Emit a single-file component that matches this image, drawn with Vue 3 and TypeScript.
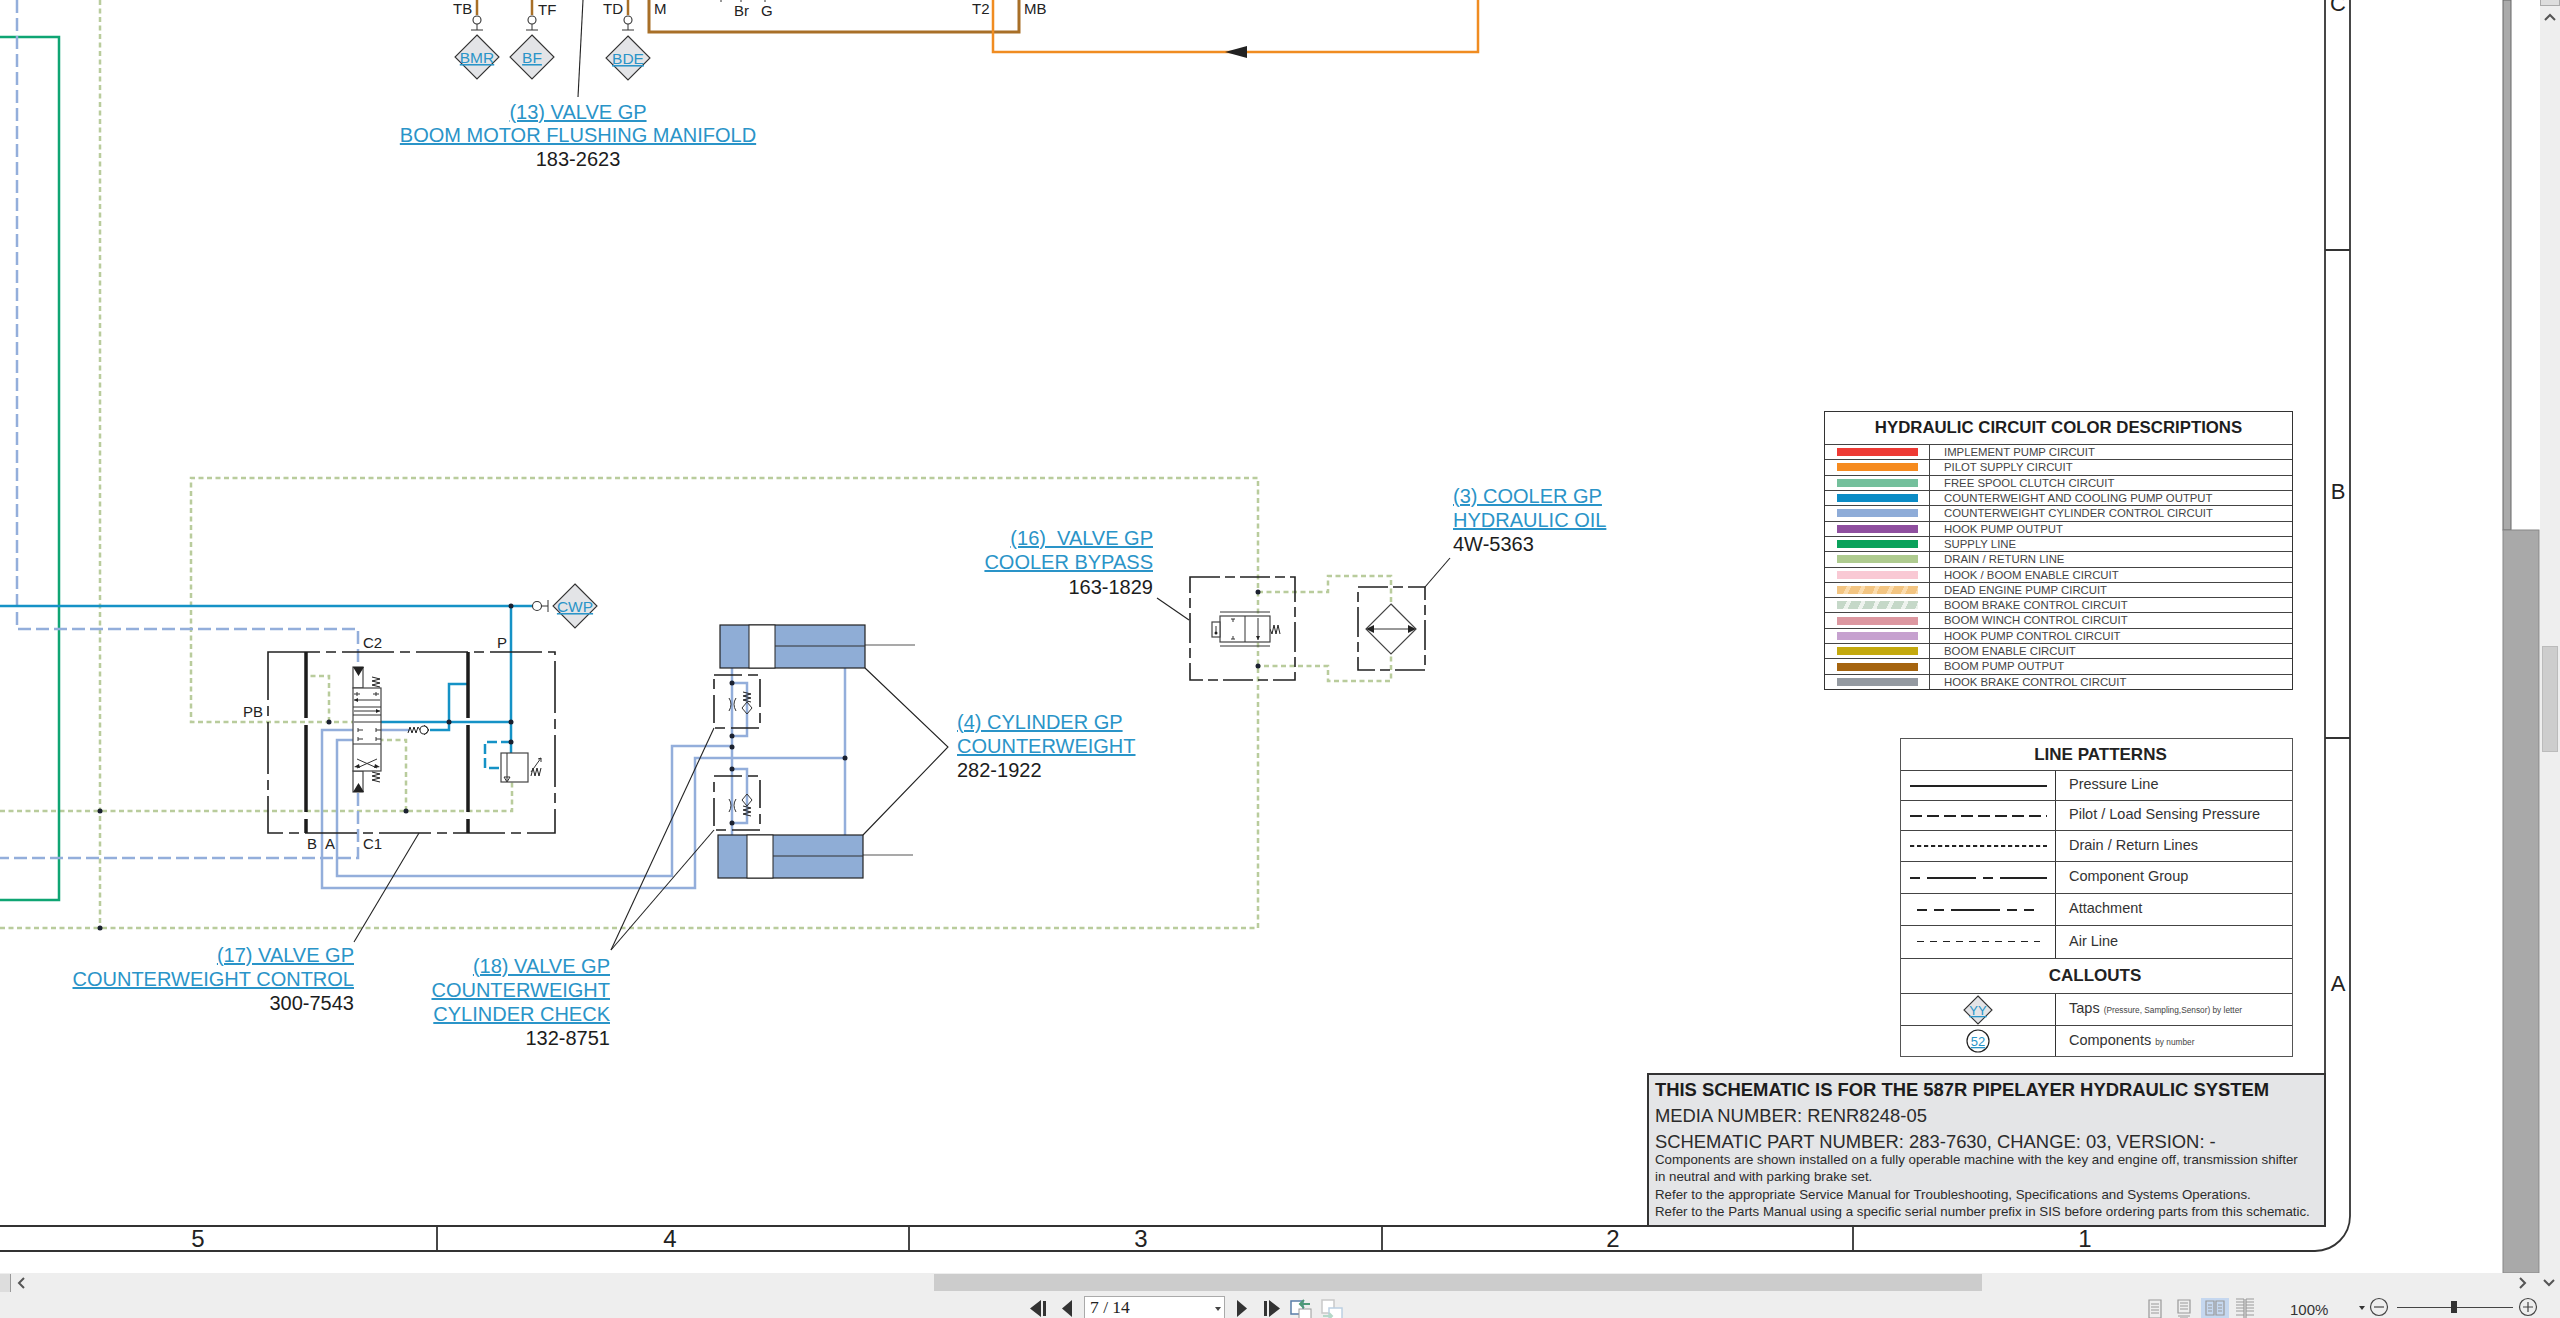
<template>
  <div class="viewer">
    <div class="main">
      <div class="sheet">
        <svg class="drawing" width="2540" height="1273" viewBox="0 0 2540 1273">
          <!-- page edge -->
          <rect x="2503" y="0" width="8" height="530" fill="#aaa" stroke="#666" />
          <rect x="2503" y="530" width="36" height="743" fill="#a9a9a9" stroke="#888" />

          <path v-for="(w, i) in wires" :key="i" :d="w.d" :class="['wire', w.cls]" />
          <path d="M1225 52 L1247 46 V58 Z" class="solid" />

          <!-- cylinders -->
          <g v-for="c in cylinders" :key="c.x">
            <path :d="`M${c.x + 55} ${c.y + 20} H${c.x + 195}`" class="rod" />
            <rect :x="c.x" :y="c.y" width="145" height="43" class="cyl" />
            <rect :x="c.x + 29" :y="c.y" width="26" height="43" class="cyl-white" />
            <path :d="`M${c.x + 55} ${c.y + 21} H${c.x + 145}`" class="rod-in" />
          </g>

          <!-- component boxes -->
          <rect x="268" y="652" width="287" height="181" class="group" />
          <path d="M306 652 V833" class="bar" />
          <path d="M468 652 V833" class="bar" />
          <rect x="714" y="675" width="46" height="53" class="group small" />
          <rect x="714" y="776" width="46" height="54" class="group small" />
          <rect x="1190" y="577" width="105" height="103" class="group mid" />
          <rect x="1358" y="587" width="67" height="83" class="group mid" />

          <path v-for="(d, i) in leaders" :key="i" :d="d" class="leader" />

          <!-- spool valve -->
          <rect x="353" y="667" width="10" height="21" class="sym" />
          <rect x="353" y="771" width="10" height="21" class="sym" />
          <path d="M353 667 H364 L358.5 676 Z M353 792 H364 L358.5 783 Z" class="solid" />
          <rect x="353" y="688" width="28" height="83" class="sym" />
          <path d="M353 715 H381 M353 744 H381 M353 707 H381 M354 722 H381" class="thin" />
          <path d="M357 692 V696 M354 694 H360 M376 692 V696 M373 694 H379 M358 730 H363 M358 728 V732 M376 730 H381 M376 728 V732 M358 739 H363 M358 737 V741 M376 739 H381 M376 737 V741 M357 768 L377 759 M357 759 L377 768" class="thin" />
          <path d="M354 700 H380 M354 711 H380" class="thin" />
          <path d="M354 700 L358 698 V702 Z M380 711 L376 709 V713 Z M354 767 L359 764 L360 768 Z M380 767 L375 764 L374 768 Z" class="solid" />
          <path v-for="(d, i) in springs" :key="i" :d="d" class="thin spring" />

          <!-- check valves -->
          <circle cx="424" cy="730" r="4" class="chk" />
          <path d="M424 725 L429 730 L424 735 M747 702 L752 708 L747 714 L742 708 Z M747 794 L752 800 L747 806 L742 800 Z" class="thin" />
          <path d="M729 698 Q733 704 729 711 M736 698 Q732 704 736 711 M729 799 Q733 805 729 812 M736 799 Q732 805 736 812" class="thin" />

          <!-- relief valve -->
          <rect x="501" y="753" width="27" height="29" class="sym" />
          <path d="M507 753 V781 M504 777 L507 782 L510 777 Z M531 772 L541 758 M538 759 L541 758 L541 762" class="thin" />

          <!-- tap fittings -->
          <g v-for="t in taps" :key="t">
            <circle :cx="t" cy="20" r="4" class="chk" />
            <path :d="`M${t} 24 V30 M${t - 6} 30 H${t + 6}`" class="thin" />
          </g>
          <path d="M548 600 V612 M542 606 H548" class="thin" />
          <circle cx="537" cy="606" r="4.5" class="chk" />
          <path d="M721 0 V2 M741 0 V2 M765 0 V2" class="thin" />

          <!-- cooler bypass valve -->
          <rect x="1220" y="616" width="50" height="26" class="sym" />
          <rect x="1212" y="622" width="8" height="15" class="sym" />
          <path d="M1245 616 V642 M1220 612 H1270 M1220 646 H1270 M1258 618 V640 M1216 626 V634 M1233 619 V622 M1231 619 H1235 M1233 636 V639 M1231 639 H1235" class="thin" />
          <path d="M1256 636 H1260 L1258 640 Z" class="solid" />
          <circle cx="1216" cy="633" r="1.5" class="solid" />

          <!-- cooler -->
          <polygon points="1391,604 1416,629 1391,654 1366,629" class="sym" />
          <path d="M1368 629 H1414" class="thin" />
          <path d="M1366 629 L1374 625 V633 Z M1416 629 L1408 625 V633 Z" class="solid" />

          <!-- connection dots -->
          <circle v-for="(d, i) in dots" :key="i" :cx="d[0]" :cy="d[1]" r="2.5" class="dot" />

          <!-- tap callouts -->
          <g v-for="t in diamonds" :key="t.name">
            <polygon :points="`${t.x},${t.y - 22} ${t.x + 22},${t.y} ${t.x},${t.y + 22} ${t.x - 22},${t.y}`" class="tap" />
            <text :x="t.x" :y="t.y + 6" text-anchor="middle" class="t-tap">{{ t.name }}</text>
          </g>

          <text v-for="(l, i) in portLabels" :key="i" :x="l[1]" :y="l[2]" class="t-port">{{ l[0] }}</text>
          <text v-for="(l, i) in labels" :key="i" :x="l.x" :y="l.y" :text-anchor="l.a" :class="l.link ? 't-link' : 't-part'">{{ l.t }}</text>

          <!-- frame -->
          <path d="M2350 0 V1216 A35 35 0 0 1 2315 1251 H0 M2325 0 V1073 M0 1226 H1647 M2325 250 H2350 M2325 738 H2350" class="frame" />
          <path v-for="x in [437, 909, 1382, 1853]" :key="x" :d="`M${x} 1226 V1251`" class="frame" />
          <text v-for="n in rulerNums" :key="n[0]" :x="n[1]" y="1247" text-anchor="middle" class="t-ruler">{{ n[0] }}</text>
          <text v-for="n in rulerLetters" :key="n[0]" x="2338" :y="n[1]" text-anchor="middle" class="t-ruler small">{{ n[0] }}</text>
        </svg>

        <div class="legend colors">
          <div class="legend-title">HYDRAULIC CIRCUIT COLOR DESCRIPTIONS</div>
          <div v-for="r in circuits" :key="r.name" class="color-row">
            <div class="swatch-cell"><div class="swatch" :style="{ background: r.bg }"></div></div>
            <div class="color-name">{{ r.name }}</div>
          </div>
        </div>

        <div class="legend patterns">
          <div class="pat-title">LINE PATTERNS</div>
          <div v-for="p in patterns" :key="p.name" class="pat-row">
            <div class="pat-sample">
              <svg width="137" height="8">
                <line :x1="p.x1" :y1="p.y" :x2="p.x2" :y2="p.y" stroke="#222" :stroke-width="p.w" :stroke-dasharray="p.dash" />
              </svg>
            </div>
            <div class="pat-name">{{ p.name }}</div>
          </div>
          <div class="pat-title second">CALLOUTS</div>
          <div class="pat-row">
            <div class="pat-sample">
              <svg width="30" height="30" viewBox="0 0 30 30">
                <polygon points="15,1 29,15 15,29 1,15" class="tap" />
                <text x="15" y="20" text-anchor="middle" class="t-mini">YY</text>
              </svg>
            </div>
            <div class="pat-name">Taps <small>(Pressure, Sampling,Sensor) by letter</small></div>
          </div>
          <div class="pat-row">
            <div class="pat-sample">
              <svg width="26" height="26" viewBox="0 0 26 26">
                <circle cx="13" cy="13" r="11" fill="#fff" stroke="#222" stroke-width="1.2" />
                <text x="13" y="18" text-anchor="middle" class="t-mini">52</text>
              </svg>
            </div>
            <div class="pat-name">Components <small>by number</small></div>
          </div>
        </div>

        <div class="title-box">
          <div class="tb-head">THIS SCHEMATIC IS FOR THE 587R PIPELAYER HYDRAULIC SYSTEM</div>
          <div class="tb-line">MEDIA NUMBER: RENR8248-05</div>
          <div class="tb-line">SCHEMATIC PART NUMBER: 283-7630, CHANGE: 03, VERSION: -</div>
          <div class="tb-notes">
            <div class="tb-note">Components are shown installed on a fully operable machine with the key and engine off, transmission shifter</div>
            <div class="tb-note">in neutral and with parking brake set.</div>
            <div class="tb-note">Refer to the appropriate Service Manual for Troubleshooting, Specifications and Systems Operations.</div>
            <div class="tb-note">Refer to the Parts Manual using a specific serial number prefix in SIS before ordering parts from this schematic.</div>
          </div>
        </div>
      </div>

      <div class="vbar">
        <div class="vstub"></div>
        <svg class="vcaret" width="12" height="8" viewBox="0 0 12 8"><path d="M1 7 L6 2 L11 7" class="chev" /></svg>
        <div class="vthumb"></div>
      </div>
    </div>

    <div class="hbar">
      <div class="hstub"></div>
      <svg width="8" height="12" viewBox="0 0 8 12"><path d="M7 1 L2 6 L7 11" class="chev" /></svg>
      <div class="hthumb"></div>
      <svg class="hright" width="8" height="12" viewBox="0 0 8 12"><path d="M1 1 L6 6 L1 11" class="chev" /></svg>
      <svg class="hdown" width="12" height="8" viewBox="0 0 12 8"><path d="M1 1 L6 6 L11 1" class="chev" /></svg>
    </div>

    <div class="toolbar">
      <div class="pager">
        <svg width="17" height="17" viewBox="0 0 17 17"><path d="M11 0 V17 L0 8.5 Z M13 1 H16 V16 H13 Z" fill="#333" /></svg>
        <svg class="prev" width="10" height="17" viewBox="0 0 10 17"><path d="M10 0 V17 L0 8.5 Z" fill="#333" /></svg>
        <div class="page-input"><span>7 / 14</span><i></i></div>
        <svg class="next" width="10" height="17" viewBox="0 0 10 17"><path d="M0 0 V17 L10 8.5 Z" fill="#333" /></svg>
        <svg class="last" width="17" height="17" viewBox="0 0 17 17"><path d="M1 1 H4 V16 H1 Z M6 0 V17 L17 8.5 Z" fill="#333" /></svg>
        <svg class="back" width="22" height="22" viewBox="0 0 22 22">
          <rect x="1" y="2" width="12" height="13" fill="#fff" stroke="#5a7da8" stroke-width="1.5" />
          <rect x="9" y="10" width="12" height="12" fill="#fff" stroke="#999" />
          <path d="M10 5 H20 M14 1 L10 5 L14 9" fill="none" stroke="#4f9a78" stroke-width="2" />
        </svg>
        <svg class="fwd" width="22" height="22" viewBox="0 0 22 22">
          <rect x="1" y="1" width="12" height="13" fill="#fff" stroke="#c9c9c9" stroke-width="1.5" />
          <rect x="8" y="9" width="13" height="13" fill="#fff" stroke="#bcd0e2" stroke-width="1.5" />
          <path d="M2 17 H11 M8 14 L11 17 L8 20" fill="none" stroke="#b5d8c8" stroke-width="2" />
        </svg>
      </div>

      <div class="views">
        <svg width="14" height="26" viewBox="0 0 14 26"><path d="M1 8 H13 V26 H1 Z M3 12 H11 M3 15 H11 M3 18 H11 M3 21 H11" class="ico" /></svg>
        <svg class="v2" width="14" height="26" viewBox="0 0 14 26"><path d="M1 8 H13 V21 H1 Z M3 11 H11 M3 14 H11 M3 17 H11 M1 24 H13 M3 26 H11" class="ico" /></svg>
        <div class="v-active">
          <svg width="20" height="16" viewBox="0 0 20 16"><path d="M1 1 H9 V15 H1 Z M11 1 H19 V15 H11 Z M3 5 H7 M3 8 H7 M3 11 H7 M13 5 H17 M13 8 H17 M13 11 H17" class="ico" /></svg>
        </div>
        <svg class="v4" width="20" height="26" viewBox="0 0 20 26"><path d="M1 7 H9 M1 10 H9 M1 13 H9 M1 16 H9 M1 19 H9 M11 7 H19 M11 10 H19 M11 13 H19 M11 16 H19 M11 19 H19 M9 7 V26 M11 7 V26 M1 23 H9 M11 23 H19" class="ico" /></svg>
        <span class="zoom-val">100%</span>
        <i class="zoom-caret"></i>
        <svg class="round" width="20" height="20" viewBox="0 0 20 20"><circle cx="10" cy="10" r="8.5" class="ico" /><path d="M5 10 H15" class="ico" /></svg>
        <div class="slider"><b></b></div>
        <svg class="round" width="20" height="20" viewBox="0 0 20 20"><circle cx="10" cy="10" r="8.5" class="ico" /><path d="M5 10 H15 M10 5 V15" class="ico" /></svg>
      </div>
    </div>
  </div>
</template>

<script setup lang="ts">
type Wire = { d: string; cls: string }
type Label = { x: number; y: number; t: string; a: string; link: boolean }

const wires: Wire[] = [
  { cls: 'olive', d: 'M100 0 V928 M0 928 H1258 V478 H191 V722 H353 M329 722 V676 H306 M0 811 H512 V782 M406 811 V740 H381 M1258 592 H1328 V576 H1391 V681 H1328 V666 H1258' },
  { cls: 'green', d: 'M0 37 H59 V900 H0' },
  { cls: 'brown', d: 'M477 0 V15 M532 0 V15 M628 0 V15' },
  { cls: 'brown thick', d: 'M649 0 V32 H1019 V0' },
  { cls: 'orange', d: 'M993 0 V52 H1478 V0' },
  { cls: 'lightdash', d: 'M17 0 V629 H358 V667 M358 793 V858 H0' },
  { cls: 'light', d: 'M353 740 H337 V876 H672 V746 H732 M410 730 H322 V888 H695 V758 H845 M732 668 V835 M845 668 V835 M732 683 H747 V736 H732 M732 769 H747 V823 H732' },
  { cls: 'blue', d: 'M0 606 H532 M511 606 V753 M381 722 H511 M449 722 V684 H468 M449 722 V730 H430' },
  { cls: 'bluedash', d: 'M511 742 H485 V768 H501' },
]

const cylinders = [
  { x: 720, y: 625 },
  { x: 718, y: 835 },
]

const leaders = [
  'M583 0 L578 97',
  'M419 833 L354 942',
  'M714 728 L611 950',
  'M714 830 L611 950',
  'M865 668 L948 747 L863 835',
  'M1157 598 L1189 620',
  'M1425 587 L1450 558',
]

const springs = [
  'M372 677 L380 679 L372 681 L380 683 L372 685 L380 687',
  'M372 772 L380 774 L372 776 L380 778 L372 780 L380 782',
  'M408 733 L410 727 L412 733 L414 727 L416 733 L418 727 L420 730',
  'M743 692 L751 694 L743 696 L751 698 L743 700 L751 702',
  'M743 806 L751 808 L743 810 L751 812 L743 814 L751 816',
  'M531 776 L533 768 L535 776 L537 768 L539 776 L541 768',
  'M1270 629 L1272 634 L1274 625 L1276 634 L1278 625 L1280 634',
]

const taps = [477, 532, 628]

const dots = [
  [511, 606], [449, 722], [511, 722], [511, 742], [329, 722], [406, 811], [100, 811], [100, 928],
  [732, 683], [732, 736], [732, 747], [732, 769], [732, 823], [845, 758], [1258, 592], [1258, 666],
]

const diamonds = [
  { name: 'BMR', x: 477, y: 57 },
  { name: 'BF', x: 532, y: 57 },
  { name: 'BDE', x: 628, y: 58 },
  { name: 'CWP', x: 575, y: 606 },
]

const portLabels: [string, number, number][] = [
  ['TB', 453, 14], ['TF', 538, 15], ['TD', 603, 14], ['M', 654, 14], ['Br', 734, 16], ['G', 761, 16],
  ['T2', 972, 14], ['MB', 1024, 14], ['C2', 363, 648], ['P', 497, 648], ['PB', 243, 717],
  ['B', 307, 849], ['A', 325, 849], ['C1', 363, 849],
]

const labels: Label[] = [
  { x: 578, y: 119, t: '(13) VALVE GP', a: 'middle', link: true },
  { x: 578, y: 142, t: 'BOOM MOTOR FLUSHING MANIFOLD', a: 'middle', link: true },
  { x: 578, y: 166, t: '183-2623', a: 'middle', link: false },
  { x: 1153, y: 545, t: '(16)  VALVE GP', a: 'end', link: true },
  { x: 1153, y: 569, t: 'COOLER BYPASS', a: 'end', link: true },
  { x: 1153, y: 594, t: '163-1829', a: 'end', link: false },
  { x: 1453, y: 503, t: '(3) COOLER GP', a: 'start', link: true },
  { x: 1453, y: 527, t: 'HYDRAULIC OIL', a: 'start', link: true },
  { x: 1453, y: 551, t: '4W-5363', a: 'start', link: false },
  { x: 957, y: 729, t: '(4) CYLINDER GP', a: 'start', link: true },
  { x: 957, y: 753, t: 'COUNTERWEIGHT', a: 'start', link: true },
  { x: 957, y: 777, t: '282-1922', a: 'start', link: false },
  { x: 354, y: 962, t: '(17) VALVE GP', a: 'end', link: true },
  { x: 354, y: 986, t: 'COUNTERWEIGHT CONTROL', a: 'end', link: true },
  { x: 354, y: 1010, t: '300-7543', a: 'end', link: false },
  { x: 610, y: 973, t: '(18) VALVE GP', a: 'end', link: true },
  { x: 610, y: 997, t: 'COUNTERWEIGHT', a: 'end', link: true },
  { x: 610, y: 1021, t: 'CYLINDER CHECK', a: 'end', link: true },
  { x: 610, y: 1045, t: '132-8751', a: 'end', link: false },
]

const rulerNums: [string, number][] = [['5', 198], ['4', 670], ['3', 1141], ['2', 1613], ['1', 2085]]
const rulerLetters: [string, number][] = [['C', 11], ['B', 499], ['A', 991]]

const hatch = (base: string, stripe: string) =>
  `repeating-linear-gradient(115deg, ${base} 0 9px, ${stripe} 9px 13px)`

const circuits = [
  { name: 'IMPLEMENT PUMP CIRCUIT', bg: '#ee3a34' },
  { name: 'PILOT SUPPLY CIRCUIT', bg: '#f68b1f' },
  { name: 'FREE SPOOL CLUTCH CIRCUIT', bg: '#74c09c' },
  { name: 'COUNTERWEIGHT AND COOLING PUMP OUTPUT', bg: '#0b8cc6' },
  { name: 'COUNTERWEIGHT CYLINDER CONTROL CIRCUIT', bg: '#8eacd8' },
  { name: 'HOOK PUMP OUTPUT', bg: '#8f4f9f' },
  { name: 'SUPPLY LINE', bg: '#0aa25b' },
  { name: 'DRAIN / RETURN LINE', bg: '#aecb8f' },
  { name: 'HOOK / BOOM ENABLE CIRCUIT', bg: '#f9c9d4' },
  { name: 'DEAD ENGINE PUMP CIRCUIT', bg: hatch('#f3c582', '#fbdcae') },
  { name: 'BOOM BRAKE CONTROL CIRCUIT', bg: hatch('#c5d8c8', '#eef3ee') },
  { name: 'BOOM WINCH CONTROL CIRCUIT', bg: '#dc97a0' },
  { name: 'HOOK PUMP CONTROL CIRCUIT', bg: '#c6a1cf' },
  { name: 'BOOM ENABLE CIRCUIT', bg: '#c4a90d' },
  { name: 'BOOM PUMP OUTPUT', bg: '#a5640f' },
  { name: 'HOOK BRAKE CONTROL CIRCUIT', bg: '#949aa1' },
]

const patterns = [
  { name: 'Pressure Line', x1: 0, x2: 137, y: 4, w: 2.2, dash: '' },
  { name: 'Pilot / Load Sensing Pressure', x1: 0, x2: 137, y: 4, w: 2.2, dash: '12 5' },
  { name: 'Drain / Return Lines', x1: 0, x2: 137, y: 4, w: 2.2, dash: '4.2 2.8' },
  { name: 'Component Group', x1: 0, x2: 137, y: 4, w: 2.2, dash: '10 7 49 7' },
  { name: 'Attachment', x1: 7, x2: 125, y: 4, w: 2.2, dash: '10 7 10 7 49 7' },
  { name: 'Air Line', x1: 7, x2: 130, y: 3.5, w: 1, dash: '7 6' },
]
</script>

<style scoped>
.viewer {
  width: 2560px;
  height: 1318px;
  display: flex;
  flex-direction: column;
  overflow: hidden;
  background: #fff;
  font-family: "Liberation Sans", Arial, sans-serif;
}

.main {
  display: flex;
  height: 1273px;
}

.sheet {
  position: relative;
  width: 2540px;
  height: 1273px;
  overflow: hidden;
}

.drawing {
  display: block;
}

.wire { fill: none; stroke-width: 2.5; }
.olive { stroke: #b9cc9c; stroke-dasharray: 5 3.5; }
.green { stroke: #0fa573; }
.brown { stroke: #a86f27; }
.thick { stroke-width: 3; }
.orange { stroke: #f08c21; }
.light { stroke: #93aedb; }
.lightdash { stroke: #93aedb; stroke-dasharray: 13 5; }
.blue { stroke: #1592c6; }
.bluedash { stroke: #1592c6; stroke-dasharray: 10 4; }

.cyl { fill: #8fadd6; stroke: #222; stroke-width: 1.2; }
.cyl-white { fill: #fff; stroke: #222; stroke-width: 1; }
.rod { stroke: #555; stroke-width: 1.2; }
.rod-in { stroke: #333; stroke-width: 1; }

.group { fill: none; stroke: #222; stroke-width: 1.6; stroke-dasharray: 52 6 10 6; }
.group.small { stroke-dasharray: 28 6 10 6; }
.group.mid { stroke-dasharray: 30 5 10 5; }
.bar { stroke: #1c1c1c; stroke-width: 3.5; stroke-dasharray: 66 7 87 7 30; }
.leader { fill: none; stroke: #222; stroke-width: 1.1; }
.sym { fill: #fff; stroke: #444; stroke-width: 1.2; }
.thin { fill: none; stroke: #333; stroke-width: 1; }
.spring { stroke: #222; }
.solid { fill: #222; }
.chk { fill: #fff; stroke: #333; stroke-width: 1.1; }
.dot { fill: #1b2130; }
.tap { fill: #e3e4e7; stroke: #333; stroke-width: 1.1; }
.frame { fill: none; stroke: #333; stroke-width: 1.8; }

.t-port { font-size: 15px; fill: #222; font-family: "Liberation Sans", Arial, sans-serif; }
.t-link { font-size: 20px; fill: #2a94c8; text-decoration: underline; white-space: pre; font-family: "Liberation Sans", Arial, sans-serif; }
.t-part { font-size: 20px; fill: #1c1c1c; font-family: "Liberation Sans", Arial, sans-serif; }
.t-tap { font-size: 15.5px; fill: #2a94c8; text-decoration: underline; font-family: "Liberation Sans", Arial, sans-serif; }
.t-mini { font-size: 13px; fill: #2a94c8; text-decoration: underline; font-family: "Liberation Sans", Arial, sans-serif; }
.t-ruler { font-size: 24px; fill: #222; font-family: "Liberation Sans", Arial, sans-serif; }
.t-ruler.small { font-size: 22px; }

/* sheet legends */
.legend {
  position: absolute;
  box-sizing: border-box;
  border: 1.5px solid #333;
  background: #fff;
  display: grid;
}

.colors {
  left: 1824px;
  top: 411px;
  width: 469px;
  height: 279px;
  grid-template-rows: 32px repeat(16, 1fr);
}

.legend-title {
  text-align: center;
  font-weight: bold;
  font-size: 16.8px;
  line-height: 31px;
  color: #1d1d1d;
}

.color-row {
  display: grid;
  grid-template-columns: 105px 1fr;
  border-top: 1.5px solid #444;
  min-height: 0;
}

.swatch-cell {
  border-right: 1.2px solid #444;
  display: flex;
  align-items: center;
  padding-left: 12px;
}

.swatch {
  width: 81px;
  height: 8px;
}

.color-name {
  padding-left: 14px;
  font-size: 11.35px;
  line-height: 14px;
  color: #444;
  white-space: nowrap;
}

.patterns {
  left: 1900px;
  top: 738px;
  width: 393px;
  height: 319px;
  grid-template-rows: 31px 30px 30px 31px 32px 32px 33px 35px 32px 1fr;
  border-color: #555;
}

.pat-title {
  text-align: center;
  font-weight: bold;
  font-size: 17px;
  line-height: 31px;
  color: #222;
  padding-left: 8px;
}

.pat-title.second {
  border-top: 1.5px solid #444;
  padding-left: 0;
  padding-right: 3px;
  line-height: 33px;
}

.pat-row {
  display: grid;
  grid-template-columns: 155px 1fr;
  border-top: 1.2px solid #444;
}

.pat-sample {
  border-right: 1.2px solid #333;
  display: flex;
  align-items: center;
  justify-content: center;
}

.pat-name {
  padding: 0 0 3px 13px;
  font-size: 14.5px;
  color: #333;
  white-space: nowrap;
  align-self: center;
}

.pat-name small {
  font-size: 8.3px;
  color: #444;
}

/* title block */
.title-box {
  position: absolute;
  left: 1647px;
  top: 1073px;
  width: 679px;
  height: 154px;
  box-sizing: border-box;
  border: 2px solid #333;
  background: #e4e5e7;
  padding: 2px 0 0 6px;
  color: #1c1c1c;
  white-space: nowrap;
}

.tb-head {
  font-size: 18.4px;
  font-weight: bold;
  line-height: 26px;
}

.tb-line {
  font-size: 18.4px;
  line-height: 25.5px;
  color: #2b2b2b;
}

.tb-notes {
  margin-top: -3px;
}

.tb-note {
  font-size: 13.3px;
  line-height: 17.4px;
  color: #2b2b2b;
}

/* side scrollbar */
.vbar {
  width: 20px;
  background: #eee;
  display: flex;
  flex-direction: column;
  align-items: center;
}

.vstub {
  width: 18px;
  height: 5px;
  background: #ddd;
  border: 1px solid #aaa;
  border-top: 0;
}

.vcaret {
  margin-top: 7px;
}

.vthumb {
  width: 16px;
  height: 106px;
  margin-top: 625px;
  background: #cdcdcd;
  border: 1px solid #bbb;
  box-sizing: border-box;
}

.chev {
  fill: none;
  stroke: #555;
  stroke-width: 2;
}

/* bottom scrollbar */
.hbar {
  height: 19px;
  display: flex;
  align-items: center;
  background: #eee;
  position: relative;
}

.hstub {
  width: 10px;
  height: 18px;
  background: #ddd;
  border-right: 1px solid #999;
  margin-right: 6px;
}

.hthumb {
  width: 1048px;
  height: 17px;
  margin-left: 909px;
  background: #ccc;
}

.hright {
  margin-left: auto;
  margin-right: 16px;
}

.hdown {
  margin-right: 5px;
}

/* toolbar */
.toolbar {
  height: 26px;
  background: #eee;
  display: flex;
  padding-left: 1030px;
  overflow: hidden;
}

.pager {
  display: flex;
  align-items: flex-start;
  padding-top: 8px;
}

.prev { margin-left: 15px; }

.page-input {
  width: 141px;
  height: 26px;
  margin: -4px 0 0 12px;
  background: #fff;
  border: 1px solid #aaa;
  box-sizing: border-box;
  position: relative;
  padding-left: 5px;
  font-family: "Liberation Serif", serif;
  font-size: 17.5px;
  line-height: 21px;
  color: #222;
}

.page-input i {
  position: absolute;
  left: 130px;
  top: 10px;
  border: 3px solid transparent;
  border-top: 4px solid #444;
}

.next { margin-left: 12px; }
.last { margin-left: 16px; }
.back { margin-left: 10px; margin-top: -1px; }
.fwd { margin-left: 9px; margin-top: -1px; }

.views {
  display: flex;
  align-items: flex-start;
  margin-left: 805px;
}

.ico {
  fill: none;
  stroke: #999;
  stroke-width: 1.2;
}

.round .ico { stroke: #444; }

.v2 { margin-left: 15px; }

.v-active {
  width: 28px;
  height: 20px;
  margin: 6px 0 0 10px;
  background: #c5d7ef;
  display: flex;
  align-items: center;
  justify-content: center;
}

.v4 { margin-left: 6px; }

.zoom-val {
  font-size: 15px;
  line-height: 17px;
  margin: 9px 0 0 35px;
  color: #333;
  width: 40px;
  font-family: "Liberation Sans", sans-serif;
}

.zoom-caret {
  border: 3.5px solid transparent;
  border-top: 4px solid #333;
  margin: 14px 0 0 29px;
}

.round {
  margin-top: 5px;
}

.zoom-caret + .round {
  margin-left: 4px;
}

.slider {
  width: 116px;
  height: 1px;
  background: #444;
  margin: 15px 5px 0 8px;
  position: relative;
}

.slider b {
  position: absolute;
  left: 54px;
  top: -6px;
  width: 6px;
  height: 12px;
  background: #333;
}
</style>
